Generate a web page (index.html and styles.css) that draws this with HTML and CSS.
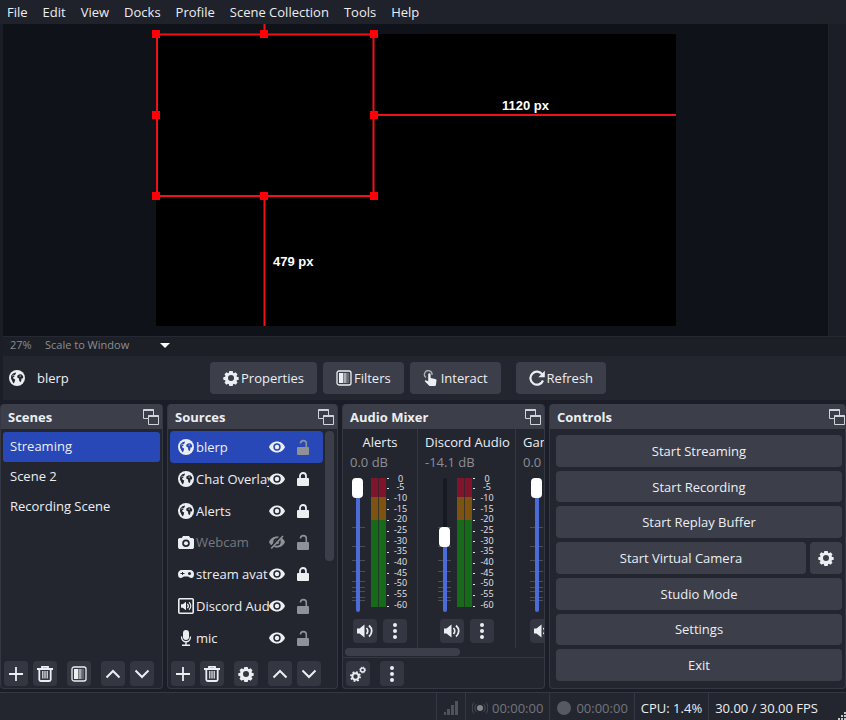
FILE: index.html
```html
<!DOCTYPE html>
<html lang="en">
<head>
<meta charset="utf-8">
<title>OBS Studio</title>
<link rel="stylesheet" href="styles.css">
</head>
<body>
<svg class="sprite" aria-hidden="true">
  <symbol id="globe" viewBox="0 0 16 16"><circle cx="8" cy="8" r="8" fill="currentColor"/><g fill="var(--hole)"><path d="M2.2 5.6 4.4 3.2 7 2.4 6.6 4.2 5 5.4 5.6 6.6 4 7.4 4.6 8.8 6.2 9.6 5.6 12 4.6 13.4 3.4 11.4 2 8.4z"/><path d="M8.4 5.4 10.6 4.2 12.8 4.4 14.2 6.6 14 8.6 12.6 8.2 12.2 11 11.2 12.2 10.2 10.6 10 8.4 8.2 7.4z"/></g><path d="M3.2 5.8 5 4.6 4 6.6zM10 6l2-.6-.6 1.4z" fill="currentColor"/></symbol>
  <symbol id="gear" viewBox="0 0 16 16"><path fill="currentColor" fill-rule="evenodd" d="M6.3 1h3.4l.4 1.8.8.4 1.6-1 2 2-1 1.7.4.8 1.8.5v2.6l-1.8.5-.4.8 1 1.7-2 2-1.6-1-.8.4-.4 1.8H6.3l-.4-1.8-.8-.4-1.6 1-2-2 1-1.7-.4-.8L.3 9.800V7.200l1.800-.5.4-.8-1-1.700 2-2 1.600 1 .8-.4zM8 5a3 3 0 1 0 0 6 3 3 0 0 0 0-6z"/></symbol>
  <symbol id="filter" viewBox="0 0 16 16"><rect x="1" y="1" width="14" height="14" rx="2" fill="none" stroke="currentColor" stroke-width="1.300"/><rect x="3" y="3" width="4" height="10" fill="currentColor"/><path d="M8 3.500v9.500M10 3.500v9.500" stroke="currentColor" stroke-width="1.500" stroke-dasharray="1 1"/><path d="M9 3v10" stroke="currentColor" stroke-width="2" opacity=".4"/><path d="M12 3v10" stroke="currentColor" stroke-width="2" opacity=".25"/></symbol>
  <symbol id="hand" viewBox="0 0 16 16"><path d="M3 7.500A3.800 3.800 0 1 1 9 5" fill="none" stroke="currentColor" stroke-width="1.300" opacity=".65"/><path fill="currentColor" d="M5.200 4.500a1.200 1.200 0 0 1 2.400 0V8l4.600.9c1 .2 1.400.8 1.300 1.700l-.6 4.400c-.1.700-.5 1-1.100 1H6.500L2 11.600c-.5-.6.3-1.500 1.200-1.200l2 .8z"/></symbol>
  <symbol id="refresh" viewBox="0 0 16 16"><path d="M13.300 4.500A6.500 6.500 0 1 0 14 10.500" fill="none" stroke="currentColor" stroke-width="2.200"/><path d="M15.800.8v6.400H9.300z" fill="currentColor"/></symbol>
  <symbol id="float" viewBox="0 0 16 16"><g fill="none" stroke="currentColor" opacity=".85"><path d="M5 9.500H.5v-9h10V6"/><path d="M.5 1h10" stroke-width="2"/><path d="M5.500 6.500h10v9h-10z"/><path d="M5.500 7h10" stroke-width="2"/></g></symbol>
  <symbol id="eye" viewBox="0 0 16 12"><path fill="currentColor" fill-rule="evenodd" d="M8 .5c3.600 0 6.600 2.200 8 5.500-1.400 3.300-4.400 5.500-8 5.500S1.400 9.300 0 6C1.400 2.700 4.400.5 8 .5zM8 2.300a3.700 3.700 0 1 0 0 7.400 3.700 3.700 0 0 0 0-7.400z"/><circle cx="8" cy="6" r="2.200" fill="currentColor"/></symbol>
  <symbol id="eyeoff" viewBox="0 0 16 14"><path fill="currentColor" fill-rule="evenodd" d="M8 1.500c3.600 0 6.600 2.200 8 5.500-1.400 3.300-4.400 5.500-8 5.500S1.400 10.300 0 7c1.400-3.300 4.400-5.500 8-5.500zM8 3.300a3.700 3.700 0 1 0 0 7.400 3.700 3.700 0 0 0 0-7.400z"/><circle cx="8" cy="7" r="2.200" fill="currentColor"/><path d="M1 14 13.500 0" stroke="var(--hole)" stroke-width="3"/><path d="M2.200 13.500 14 1" stroke="currentColor" stroke-width="1.600"/></symbol>
  <symbol id="lock" viewBox="0 0 12 14"><rect y="6" width="12" height="8" rx="1" fill="currentColor"/><path d="M3 7V4a3 3 0 0 1 6 0v3" fill="none" stroke="currentColor" stroke-width="1.800"/></symbol>
  <symbol id="unlock" viewBox="0 0 12 16"><rect y="8" width="12" height="8" rx="1" fill="currentColor"/><path d="M3.500 4.500a2.900 2.900 0 0 1 5.800 0V9" fill="none" stroke="currentColor" stroke-width="1.600"/></symbol>
  <symbol id="camera" viewBox="0 0 16 16"><path fill="currentColor" fill-rule="evenodd" d="M5 2h6l1.300 2H14.500L16 5v8.500L15 15H1l-1-1.500V5l1.500-1h2.200zM8 5.500a3.800 3.800 0 1 0 0 7.600 3.800 3.800 0 0 0 0-7.600z"/><circle cx="8" cy="9.300" r="2" fill="currentColor"/></symbol>
  <symbol id="pad" viewBox="0 0 16 10"><path fill="currentColor" d="M4 1h8c2.600 0 4 1.800 4 4.200C16 8 14.800 9 13.200 9 11.600 9 11 7.400 9.800 7.400H6.200C5 7.400 4.400 9 2.800 9 1.200 9 0 8 0 5.200 0 2.800 1.400 1 4 1z"/><path d="M2.500 4.500h4M4.500 3v3" stroke="var(--hole)"/><circle cx="11.500" cy="4.500" r="1.500" fill="var(--hole)"/></symbol>
  <symbol id="audio" viewBox="0 0 16 16"><rect x=".8" y=".8" width="14.400" height="14.400" rx="1" fill="none" stroke="currentColor" stroke-width="1.600"/><path fill="currentColor" d="M3 6.300h1.800L8 3.800v8.400L4.800 9.700H3z"/><path d="M9.300 5.800c1.200 1.200 1.200 3.200 0 4.400M11 4.200c2.400 2.200 2.400 5.400 0 7.600" fill="none" stroke="currentColor" stroke-width="1.200"/></symbol>
  <symbol id="mic" viewBox="0 0 16 16"><rect x="5" y="0" width="6" height="10" rx="3" fill="currentColor"/><path d="M3.500 6.500c0 7 9 7 9 0M8 12v3M4 15.200h8" fill="none" stroke="currentColor" stroke-width="1.400"/></symbol>
  <symbol id="plus" viewBox="0 0 16 16"><path d="M8 1v14M1 8h14" stroke="currentColor" stroke-width="1.800"/></symbol>
  <symbol id="trash" viewBox="0 0 16 16"><path d="M0 3h16M5 2V.8h6V2" fill="none" stroke="currentColor" stroke-width="1.800"/><path d="M2.300 4v9.500q0 1.500 1.500 1.500h8.400q1.500 0 1.500-1.500V4" fill="none" stroke="currentColor" stroke-width="1.800"/><path d="M5.800 5v7.500M8 5v7.500M10.200 5v7.500" stroke="currentColor" stroke-width="1.200"/></symbol>
  <symbol id="up" viewBox="0 0 16 16"><path d="M1.500 11.500 8 5l6.500 6.500" fill="none" stroke="currentColor" stroke-width="2"/></symbol>
  <symbol id="down" viewBox="0 0 16 16"><path d="M1.500 4.500 8 11l6.500-6.500" fill="none" stroke="currentColor" stroke-width="2"/></symbol>
  <symbol id="dots" viewBox="0 0 16 16"><g fill="currentColor"><circle cx="8" cy="2" r="2"/><circle cx="8" cy="8" r="2"/><circle cx="8" cy="14" r="2"/></g></symbol>
  <symbol id="gears" viewBox="0 0 16 16"><circle cx="5.500" cy="10.500" r="3.200" fill="none" stroke="currentColor" stroke-width="2"/><circle cx="5.500" cy="10.500" r="4.600" fill="none" stroke="currentColor" stroke-width="1.600" stroke-dasharray="1.800 1.810"/><circle cx="12.600" cy="4" r="2" fill="none" stroke="currentColor" stroke-width="1.400"/><circle cx="12.600" cy="4" r="2.900" fill="none" stroke="currentColor" stroke-dasharray="1.200 1.080"/></symbol>
  <symbol id="speaker" viewBox="0 0 16 16"><path fill="currentColor" d="M0 5.500h2.500L7.500 1.500v13L2.500 10.500H0z"/><path d="M9.500 5c1.600 1.700 1.600 4.300 0 6M12 2.500c3.600 3.200 3.600 7.800 0 11" fill="none" stroke="currentColor" stroke-width="1.800"/></symbol>
  <symbol id="ticks" viewBox="0 0 13 136"><path d="M0 51.500h13M0 70.500h13M0 84.500h13M0 95.500h13M0 105.500h13M0 111.500h13M0 115.500h13M0 121.500h13M0 124.500h13" stroke="#4b4e59"/></symbol>
  <symbol id="meter" viewBox="0 0 18 136">
    <path fill="#80142a" d="M0 2h15v19H0z"/><path fill="#7d5312" d="M0 21h15v23H0z"/><path fill="#176a1a" d="M0 44h15v87H0z"/><path d="M7.500 2v129" stroke="#24262f" opacity=".7"/>
    <path d="M16 2.500h2M16 12.500h2M16 23.500h2M16 33.500h2M16 44.500h2M16 55.500h2M16 65.500h2M16 76.500h2M16 87.500h2M16 97.500h2M16 108.500h2M16 119.500h2M16 130.500h2" stroke="#e4e5e8"/>
  </symbol>
</svg>

<nav class="menu">
  <a href="#">File</a><a href="#">Edit</a><a href="#">View</a><a href="#">Docks</a><a href="#">Profile</a><a href="#">Scene Collection</a><a href="#">Tools</a><a href="#">Help</a>
</nav>

<main>
  <section class="preview" aria-label="Preview">
    <svg class="stage" viewBox="151 24 530 302">
      <path fill="#000" d="M156 34h520v292H156z"/>
      <g fill="none" stroke="#f01018" stroke-width="2"><path d="M157 34.500h216.500V196H157zM264.500 24v10M264.500 196v130M373 115h303"/></g>
      <path fill="#ff0008" d="M152 30h8v8h-8zM260 30h8v8h-8zM370 30h8v8h-8zM152 111h8v8h-8zM370 111h8v8h-8zM152 192h8v8h-8zM260 192h8v8h-8zM370 192h8v8h-8z"/>
      <g class="measure"><text x="502" y="110">1120 px</text><text x="273" y="266">479 px</text></g>
    </svg>
  </section>

  <div class="zoombar">
    <span class="percent">27%</span>
    <select aria-label="Preview scaling"><option>Scale to Window</option></select>
    <svg class="caret" viewBox="0 0 10 5"><path fill="#fff" d="M0 0h10L5 5z"/></svg>
  </div>

  <section class="context">
    <svg class="icon"><use href="#globe"/></svg>
    <span class="current">blerp</span>
    <button class="btn"><svg class="icon"><use href="#gear"/></svg>Properties</button>
    <button class="btn"><svg class="icon"><use href="#filter"/></svg>Filters</button>
    <button class="btn"><svg class="icon"><use href="#hand"/></svg>Interact</button>
    <button class="btn refresh"><svg class="icon"><use href="#refresh"/></svg>Refresh</button>
  </section>

  <div class="docks">
    <section class="dock">
      <header><h2>Scenes</h2><button class="float" aria-label="Float scenes"><svg><use href="#float"/></svg></button></header>
      <ul class="scenes">
        <li class="selected">Streaming</li><li>Scene 2</li><li>Recording Scene</li>
      </ul>
      <footer class="tools">
        <button aria-label="Add scene"><svg><use href="#plus"/></svg></button>
        <button aria-label="Remove scene"><svg><use href="#trash"/></svg></button>
        <button class="group" aria-label="Scene filters"><svg><use href="#filter"/></svg></button>
        <button class="group" aria-label="Move scene up"><svg><use href="#up"/></svg></button>
        <button aria-label="Move scene down"><svg><use href="#down"/></svg></button>
      </footer>
    </section>

    <section class="dock">
      <header><h2>Sources</h2><button class="float" aria-label="Float sources"><svg><use href="#float"/></svg></button></header>
      <div class="scroller">
        <ul class="sources">
          <li class="selected"><svg class="icon"><use href="#globe"/></svg><span>blerp</span><button aria-label="Hide"><svg class="eye"><use href="#eye"/></svg></button><button class="open" aria-label="Lock"><svg class="lock"><use href="#unlock"/></svg></button></li>
          <li><svg class="icon"><use href="#globe"/></svg><span>Chat Overlay</span><button aria-label="Hide"><svg class="eye"><use href="#eye"/></svg></button><button aria-label="Unlock"><svg class="lock"><use href="#lock"/></svg></button></li>
          <li><svg class="icon"><use href="#globe"/></svg><span>Alerts</span><button aria-label="Hide"><svg class="eye"><use href="#eye"/></svg></button><button aria-label="Unlock"><svg class="lock"><use href="#lock"/></svg></button></li>
          <li class="hidden"><svg class="icon"><use href="#camera"/></svg><span>Webcam</span><button class="open" aria-label="Show"><svg class="eye"><use href="#eyeoff"/></svg></button><button class="open" aria-label="Lock"><svg class="lock"><use href="#unlock"/></svg></button></li>
          <li><svg class="icon"><use href="#pad"/></svg><span>stream avat</span><button aria-label="Hide"><svg class="eye"><use href="#eye"/></svg></button><button aria-label="Unlock"><svg class="lock"><use href="#lock"/></svg></button></li>
          <li><svg class="icon"><use href="#audio"/></svg><span>Discord Aud</span><button aria-label="Hide"><svg class="eye"><use href="#eye"/></svg></button><button class="open" aria-label="Lock"><svg class="lock"><use href="#unlock"/></svg></button></li>
          <li><svg class="icon"><use href="#mic"/></svg><span>mic</span><button aria-label="Hide"><svg class="eye"><use href="#eye"/></svg></button><button class="open" aria-label="Lock"><svg class="lock"><use href="#unlock"/></svg></button></li>
        </ul>
        <div class="vbar"></div>
      </div>
      <footer class="tools">
        <button aria-label="Add source"><svg><use href="#plus"/></svg></button>
        <button aria-label="Remove source"><svg><use href="#trash"/></svg></button>
        <button class="group" aria-label="Source properties"><svg><use href="#gear"/></svg></button>
        <button class="group" aria-label="Move source up"><svg><use href="#up"/></svg></button>
        <button aria-label="Move source down"><svg><use href="#down"/></svg></button>
      </footer>
    </section>

    <section class="dock">
      <header><h2>Audio Mixer</h2><button class="float" aria-label="Float mixer"><svg><use href="#float"/></svg></button></header>
      <div class="channels">
        <article class="channel">
          <h3>Alerts</h3><p>0.0 dB</p>
          <div class="levels"><div class="fader"><svg><use href="#ticks"/></svg><input class="full" type="range" aria-label="Alerts volume" value="100"></div><svg class="meter"><use href="#meter"/></svg><ul class="scale"><li>0</li><li>-5</li><li>-10</li><li>-15</li><li>-20</li><li>-25</li><li>-30</li><li>-35</li><li>-40</li><li>-45</li><li>-50</li><li>-55</li><li>-60</li></ul></div>
          <div class="pair"><button aria-label="Mute"><svg><use href="#speaker"/></svg></button><button aria-label="Options"><svg><use href="#dots"/></svg></button></div>
        </article>
        <article class="channel">
          <h3>Discord Audio</h3><p>-14.1 dB</p>
          <div class="levels"><div class="fader"><svg><use href="#ticks"/></svg><input class="partial" type="range" aria-label="Discord Audio volume" value="57"></div><svg class="meter"><use href="#meter"/></svg><ul class="scale"><li>0</li><li>-5</li><li>-10</li><li>-15</li><li>-20</li><li>-25</li><li>-30</li><li>-35</li><li>-40</li><li>-45</li><li>-50</li><li>-55</li><li>-60</li></ul></div>
          <div class="pair"><button aria-label="Mute"><svg><use href="#speaker"/></svg></button><button aria-label="Options"><svg><use href="#dots"/></svg></button></div>
        </article>
        <article class="channel clipped">
          <h3>Game Audio</h3><p>0.0 dB</p>
          <div class="levels"><div class="fader"><svg><use href="#ticks"/></svg><input class="full" type="range" aria-label="Game Audio volume" value="100"></div></div>
          <div class="pair"><button aria-label="Mute"><svg><use href="#speaker"/></svg></button></div>
        </article>
      </div>
      <div class="hbar"></div>
      <footer class="tools ruled">
        <button aria-label="Audio settings"><svg><use href="#gears"/></svg></button>
        <button class="group" aria-label="Mixer options"><svg><use href="#dots"/></svg></button>
      </footer>
    </section>

    <section class="dock">
      <header><h2>Controls</h2><button class="float edge" aria-label="Float controls"><svg><use href="#float"/></svg></button></header>
      <div class="controls">
        <button class="btn">Start Streaming</button>
        <button class="btn">Start Recording</button>
        <button class="btn">Start Replay Buffer</button>
        <div class="split"><button class="btn">Start Virtual Camera</button><button class="btn cog" aria-label="Virtual camera settings"><svg class="icon"><use href="#gear"/></svg></button></div>
        <button class="btn">Studio Mode</button>
        <button class="btn">Settings</button>
        <button class="btn">Exit</button>
      </div>
    </section>
  </div>
</main>

<footer class="status">
  <div class="cell"><svg class="icon" viewBox="0 0 16 16"><path fill="#50535d" d="M1 12h2v3H1zM4 9h3v6H4zM8 5h3v10H8zM12 1h3v14h-3z"/></svg></div>
  <div class="cell dim"><svg class="icon" viewBox="0 0 16 16"><circle cx="8" cy="8" r="3" fill="#85878e"/><path d="M4.500 4c-2 2-2 6 0 8M11.500 4c2 2 2 6 0 8M2 2.500c-2.500 3-2.500 8 0 11M14 2.500c2.500 3 2.500 8 0 11" fill="none" stroke="#4a4d57"/></svg>00:00:00</div>
  <div class="cell dim"><svg class="icon" viewBox="0 0 16 16"><circle cx="8" cy="8" r="7" fill="#565962"/></svg>00:00:00</div>
  <div class="cell">CPU: 1.4%</div>
  <div class="cell fps">30.00 / 30.00 FPS</div>
  <svg class="grip" viewBox="0 0 8 8"><path fill="#c8c9cd" d="M6 0h2v2H6zM3 3h2v2H3zM6 3h2v2H6zM0 6h2v2H0zM3 6h2v2H3zM6 6h2v2H6z"/></svg>
</footer>
</body>
</html>
```
FILE: styles.css
```css
:root {
  --base: #1b1d27;
  --panel: #24262f;
  --raised: #3c3e4a;
  --line: #353842;
  --accent: #2848b8;
  --text: #eceef2;
  --muted: #8c8e94;
  --hole: var(--panel);
}
* { box-sizing: border-box; }
body {
  margin: 0;
  min-height: 100vh;
  display: flex;
  flex-direction: column;
  background: var(--base);
  color: var(--text);
  font: 13px/18px "Open Sans", "Noto Sans", sans-serif;
  overflow: hidden;
}
h2, h3, p, ul { margin: 0; padding: 0; font-size: 13px; list-style: none; }
button { padding: 0; border: 0; background: none; color: inherit; font: inherit; display: flex; align-items: center; justify-content: center; }
svg { display: block; flex: none; }
.sprite { width: 0; height: 0; position: absolute; }
.icon { width: 16px; height: 16px; }

.menu { display: flex; gap: 15px; height: 24px; padding: 3px 7px; background: #1f212b; }
.menu a { color: inherit; text-decoration: none; }

main { flex: 1; display: flex; flex-direction: column; }
.preview { height: 312px; margin: 0 17px 0 3px; background: #10121a; display: flex; justify-content: center; border-right: 1px solid #1f222b; }
.stage { width: 530px; height: 302px; }
.measure { fill: #fff; font: bold 13px "Liberation Sans", sans-serif; }

.zoombar { height: 20px; margin-left: 3px; padding: 0 0 3px 7px; display: flex; align-items: center; border-top: 1px solid #262933; background: #1d1f27; color: var(--muted); font-size: 11px; }
.percent { width: 35px; }
.zoombar select { appearance: none; width: 115px; padding: 0; border: 0; background: none; color: inherit; font: inherit; }
.caret { width: 10px; height: 5px; }

.context { height: 44px; margin-left: 3px; padding-left: 6px; display: flex; align-items: center; gap: 6px; background: var(--panel); }
.current { width: 173px; padding-left: 6px; }
.btn { height: 32px; padding: 0 13px; gap: 2px; border-radius: 4px; background: var(--raised); }
.refresh { margin-left: 9px; }

.docks { flex: 1; display: grid; grid-template-columns: 163fr 171fr 203fr 297fr; gap: 4px; padding: 4px 0 3px; }
.dock { min-width: 0; display: flex; flex-direction: column; overflow: hidden; background: var(--panel); border: solid var(--line); border-width: 0 1px 1px; border-radius: 4px; }
.dock > header { height: 25px; margin: 0 -1px; padding: 0 4px 0 8px; display: flex; align-items: center; justify-content: space-between; background: var(--raised); }
.float svg { width: 16px; height: 16px; }
.float.edge { margin-right: -3px; }

.scenes { flex: 1; padding: 3px 2px; }
.scenes li { height: 30px; padding: 5px 7px; border-radius: 3px; }
.selected { --hole: var(--accent); background: var(--accent); }
.scroller { flex: 1; display: flex; padding: 2px 3px 0 2px; gap: 2px; }
.sources { flex: 1; min-width: 0; display: grid; grid-template-columns: minmax(0, 1fr); grid-auto-rows: 1fr; }
.sources li { display: flex; align-items: center; padding: 0 14px 0 8px; border-radius: 4px; }
.sources span { flex: 1; min-width: 0; margin-left: 2px; overflow: hidden; white-space: nowrap; }
.sources button { width: 16px; }
.sources button + button { width: 12px; margin-left: 12px; }
.eye { width: 16px; height: 14px; }
.lock { width: 12px; height: 16px; }
.open { color: #909197; }
.hidden span { color: #77797f; }
.vbar { width: 9px; height: 130px; border-radius: 4px; background: var(--raised); }

.tools { height: 34px; padding: 0 3px 2px; display: flex; align-items: flex-end; gap: 5px; }
.tools button { width: 24px; height: 25px; border-radius: 4px; background: #343641; }
.tools svg { width: 16px; height: 16px; }
.tools .group { margin-left: 5px; }
.ruled { height: 31px; border-top: 1px solid var(--line); }

.channels { flex: 1; display: grid; grid-template-columns: 75px 98px 86px; }
.channel { padding: 4px 7px 0; border-right: 1px solid var(--line); text-align: center; }
.channel h3 { font-weight: 400; white-space: nowrap; line-height: 18px; }
.channel p { margin-top: 2px; color: var(--muted); text-align: left; white-space: nowrap; }
.levels { display: flex; justify-content: center; gap: 6px; margin-top: 5px; }
.fader { position: relative; width: 13px; height: 136px; }
.fader svg { width: 13px; height: 136px; }
.fader input { position: absolute; inset: 2px 0 0; margin: 0; width: 13px; height: 134px; appearance: none; writing-mode: vertical-lr; direction: rtl; background: none; }
.fader input::-webkit-slider-runnable-track { width: 4px; border-radius: 2px; background: #4a6bd8; }
.fader .partial::-webkit-slider-runnable-track { background: linear-gradient(#171922 50%, #4a6bd8 50%); }
.fader input::-webkit-slider-thumb { appearance: none; width: 11px; height: 20px; margin-left: -4px; border-radius: 4px; background: #fff; }
.meter { width: 18px; height: 136px; }
.scale { width: 16px; height: 134px; display: grid; grid-template-rows: 6px repeat(12, 1fr); align-items: center; color: #e4e5e8; margin-left: -2px; }
.scale li { font-size: 9px; line-height: 10px; }
.pair { display: flex; justify-content: center; gap: 6px; margin-top: 7px; }
.pair button { width: 24px; height: 24px; border-radius: 4px; background: #343641; }
.pair svg { width: 16px; height: 16px; }
.clipped .levels, .clipped .pair { justify-content: flex-start; padding-left: 7px; }
.hbar { width: 115px; height: 8px; margin: 0 0 1px 2px; border-radius: 4px; background: var(--raised); }

.controls { flex: 1; display: flex; flex-direction: column; gap: 4px; padding: 6px 3px 7px 6px; }
.controls > * { flex: 1; }
.split { display: flex; gap: 4px; }
.split .btn { flex: 1; height: auto; }
.split .cog { flex: none; width: 32px; padding: 0; }

.status { height: 28px; display: flex; justify-content: flex-end; background: var(--panel); border-top: 1px solid var(--line); }
.cell { display: flex; align-items: center; gap: 4px; padding: 3px 6px 0; border-left: 1px solid var(--line); }
.dim { color: #73757c; }
.fps { padding-right: 20px; }
.grip { width: 8px; height: 8px; align-self: flex-end; }
```
